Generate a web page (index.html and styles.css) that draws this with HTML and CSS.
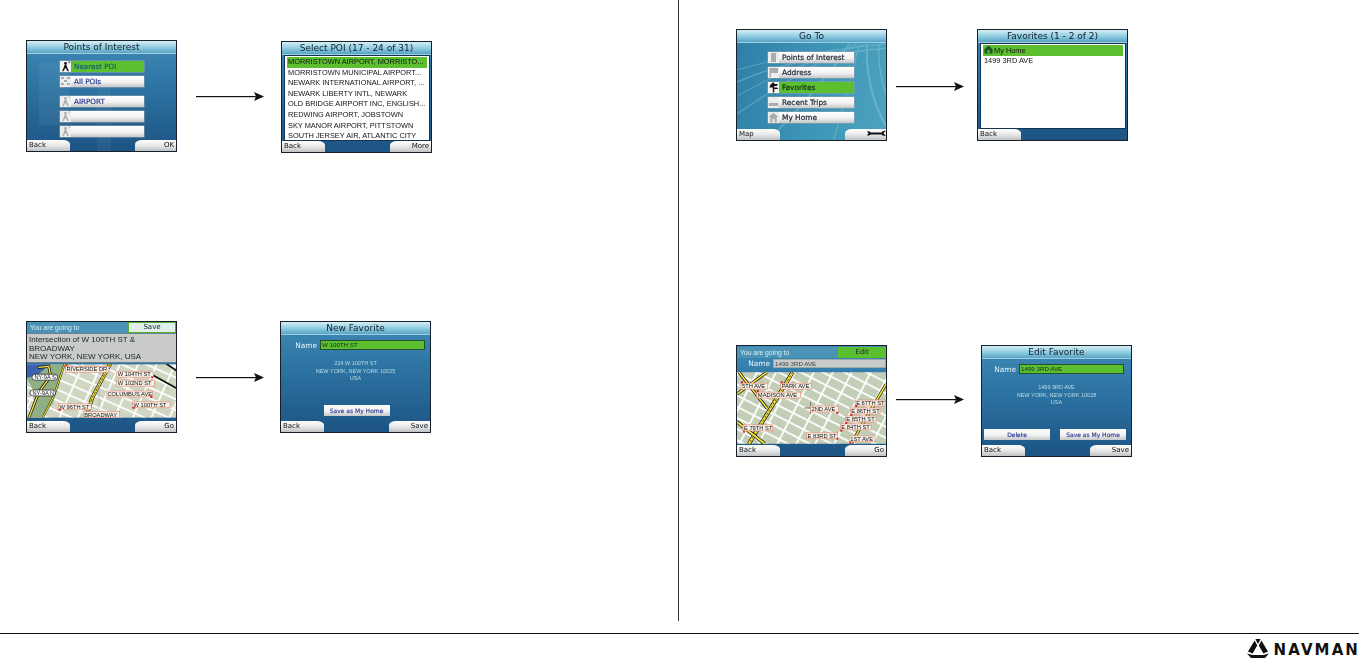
FILE: index.html
```html
<!DOCTYPE html>
<html lang="en">
<head>
    <meta charset="UTF-8">
    <meta name="viewport" content="width=device-width, initial-scale=1.0">
    <title>Navman manual page</title>
    <link rel="stylesheet" href="styles.css">
</head>
<body>
    <svg class="defs" width="0" height="0">
        <symbol id="arrow" viewBox="0 0 68 9">
            <rect x="0" y="4" width="60" height="1.2" fill="#111"/>
            <path d="M58 0 L68 4.5 L58 9 L60 4.5 Z" fill="#111"/>
        </symbol>
        <symbol id="i-person" viewBox="0 0 11 11">
            <circle cx="5.5" cy="2.2" r="1.3"/>
            <path d="M4.6 3.6 H6.4 L7 6 L9 10.2 H7.6 L5.5 6.8 L3.4 10.2 H2 L4 6 Z"/>
            <rect x="8.4" y="0.6" width="1.8" height="1"/>
        </symbol>
        <symbol id="i-dots" viewBox="0 0 11 11">
            <path d="M1 1h3v2H1zM7 1h3v2H7zM4 4h3v2H4zM1 7h3v2H1zM7 7h3v2H7z"/>
        </symbol>
        <symbol id="i-tower" viewBox="0 0 11 11">
            <path d="M3 1.5 Q5.5 .2 8 1.5 V10 H3 Z"/>
        </symbol>
        <symbol id="i-flag" viewBox="0 0 11 11">
            <path d="M1.5 1 H10 V6 H3 V10.5 H1.5 Z"/>
        </symbol>
        <symbol id="i-sign" viewBox="0 0 11 11">
            <path d="M4.8 .5 H6.2 V2 H10 L8.6 4 H6.2 V5.4 H9 L10.4 7 H6.2 V10.5 H4.8 V5.4 H1.2 L2.6 3.6 H4.8 V3.4 H1.6 Z"/>
        </symbol>
        <symbol id="i-trips" viewBox="0 0 11 11">
            <path d="M.8 6 H10.2 V9 H.8 Z"/>
        </symbol>
        <symbol id="i-home" viewBox="0 0 11 11">
            <path d="M5.5 .8 L10.4 5 H8.8 V10.4 H6.6 V7 H4.4 V10.4 H2.2 V5 H.6 Z"/>
        </symbol>
    </svg>

    <div class="page">
        <div class="col col-left">
            <div class="row row-a1">
                <div class="screen screen-poi">
                    <svg class="art" viewBox="0 0 151 112"><path d="M12 22 H34 Q42 22 42 30 V84 H12 Z M48 36 H100 V44 H48 Z M70 44 H84 V110 H70 Z" fill="#fff" opacity=".05"/></svg>
                    <div class="title">Points of Interest</div>
                    <div class="menu menu-poi">
                        <div class="item selected"><svg class="ico dark"><use href="#i-person"/></svg><span>Nearest POI</span></div>
                        <div class="item"><svg class="ico"><use href="#i-dots"/></svg><span>All POIs</span></div>
                        <div class="item gap-before"><svg class="ico"><use href="#i-person"/></svg><span>AIRPORT</span></div>
                        <div class="item"><svg class="ico"><use href="#i-person"/></svg></div>
                        <div class="item"><svg class="ico"><use href="#i-person"/></svg></div>
                    </div>
                    <div class="keys"><div class="key">Back</div><div class="key right">OK</div></div>
                </div>
                <svg class="arrow arrow-l"><use href="#arrow"/></svg>
                <div class="screen nudge">
                    <div class="title">Select POI (17 - 24 of 31)</div>
                    <div class="list">
                        <div class="line selected">MORRISTOWN AIRPORT, MORRISTO...</div>
                        <div class="line">MORRISTOWN MUNICIPAL AIRPORT...</div>
                        <div class="line">NEWARK INTERNATIONAL AIRPORT, ...</div>
                        <div class="line">NEWARK LIBERTY INTL, NEWARK</div>
                        <div class="line">OLD BRIDGE AIRPORT INC, ENGLISH...</div>
                        <div class="line">REDWING AIRPORT, JOBSTOWN</div>
                        <div class="line">SKY MANOR AIRPORT, PITTSTOWN</div>
                        <div class="line">SOUTH JERSEY AIR, ATLANTIC CITY</div>
                    </div>
                    <div class="keys"><div class="key">Back</div><div class="key right">More</div></div>
                </div>
            </div>

            <div class="row row-a2">
                <div class="screen">
                    <div class="going"><span>You are going to</span><div class="going-btn pale">Save</div></div>
                    <div class="desc">Intersection of W 100TH ST &amp;<br>BROADWAY<br>NEW YORK, NEW YORK, USA</div>
                    <svg class="map map-short" viewBox="0 0 151 54">
                        <defs>
                            <pattern id="grid-a" width="17" height="10" patternUnits="userSpaceOnUse" patternTransform="rotate(24)">
                                <rect width="17" height="10" fill="#cfd6c2"/>
                                <rect width="17" height="1.8" fill="#fff"/>
                                <rect width="1.8" height="10" fill="#fff"/>
                            </pattern>
                        </defs>
                        <rect width="151" height="54" fill="url(#grid-a)"/>
                        <path d="M0 0 H24 L12 10 L0 14 Z" fill="#3b62b0"/>
                        <path d="M0 14 L12 10 L24 0 H38 L32 22 L26 40 L14 54 H4 L8 30 Z" fill="#8fae82"/>
                        <g fill="none" stroke-linecap="round">
                            <path d="M2 54 L12 28 L24 12 L22 2 L12 3" stroke="#111" stroke-width="2.8"/>
                            <path d="M2 54 L12 28 L24 12 L22 2 L12 3" stroke="#f5e43a" stroke-width="1.4"/>
                            <path d="M38 0 L28 30 L16 54" stroke="#111" stroke-width="2"/>
                            <path d="M38 0 L28 30 L16 54" stroke="#f5e43a" stroke-width="1.1"/>
                            <path d="M84 0 L66 34 L60 54" stroke="#111" stroke-width="3.8"/>
                            <path d="M84 0 L66 34 L60 54" stroke="#f5e43a" stroke-width="2.6"/>
                            <path d="M84 0 L66 34 L60 54" stroke="#111" stroke-width=".7" stroke-dasharray="2 2"/>
                            <path d="M126 10 L151 24" stroke="#111" stroke-width="1.8"/>
                            <path d="M142 0 L151 6" stroke="#111" stroke-width="1.8"/>
                            <path d="M73 54 V0" stroke="#9fb0c8" stroke-width=".6"/>
                        </g>
                        <g class="tag"><rect x="39" y="2" width="44" height="6"/><text x="40" y="7">RIVERSIDE DR</text></g>
                        <g class="tag"><rect x="91" y="7" width="37" height="6"/><text x="92" y="12">W 104TH ST</text></g>
                        <g class="tag"><rect x="91" y="16" width="38" height="6"/><text x="92" y="21">W 102ND ST</text></g>
                        <g class="tag"><rect x="81" y="27" width="46" height="6"/><text x="81.5" y="32">COLUMBUS AVE</text></g>
                        <g class="tag"><rect x="107" y="38" width="38" height="6"/><text x="108" y="43">W 100TH ST</text></g>
                        <g class="tag"><rect x="32" y="40" width="33" height="6"/><text x="33" y="45">W 96TH ST</text></g>
                        <g class="tag"><rect x="57" y="48" width="37" height="6"/><text x="58" y="53">BROADWAY</text></g>
                        <g class="pill"><rect x="5" y="10" width="26" height="6" rx="3"/><text x="7.5" y="15">NY-9A S</text></g>
                        <g class="pill"><rect x="3" y="26" width="26" height="6" rx="3"/><text x="5.5" y="31">NY-9A N</text></g>
                        <path fill="#e02020" d="M39 0h2v2h-2zM126 12h2v2h-2zM125 32h2v2h-2zM107 43h2v2h-2zM32 45h2v2h-2z"/>
                    </svg>
                    <div class="keys"><div class="key">Back</div><div class="key right">Go</div></div>
                </div>
                <svg class="arrow arrow-l"><use href="#arrow"/></svg>
                <div class="screen shift-l">
                    <div class="title">New Favorite</div>
                    <div class="name-row"><label>Name</label><div class="field">W 100TH ST</div></div>
                    <div class="addr">224 W 100TH ST<br>NEW YORK, NEW YORK 10025<br>USA</div>
                    <div class="actions"><div class="btn">Save as My Home</div></div>
                    <div class="keys"><div class="key">Back</div><div class="key right">Save</div></div>
                </div>
            </div>
        </div>

        <div class="col col-right">
            <div class="row row-b1">
                <div class="screen screen-goto">
                    <svg class="art" viewBox="0 0 151 112">
                        <g fill="none" stroke="#bfe6f0" opacity=".28">
                            <path d="M0 40 Q60 22 151 14" stroke-width="1"/>
                            <path d="M0 52 Q60 26 151 18" stroke-width="1.4"/>
                            <path d="M0 66 Q60 32 130 14" stroke-width="1"/>
                            <path d="M0 84 Q70 36 120 14" stroke-width="1.2"/>
                            <path d="M30 112 Q90 50 112 14" stroke-width="1.6"/>
                            <path d="M96 112 Q112 60 122 14" stroke-width="1"/>
                            <path d="M151 100 Q128 60 130 14" stroke-width="2"/>
                            <path d="M151 70 Q140 40 142 14" stroke-width="1.2"/>
                        </g>
                    </svg>
                    <div class="title">Go To</div>
                    <div class="menu menu-goto">
                        <div class="item"><svg class="ico"><use href="#i-tower"/></svg><span>Points of Interest</span></div>
                        <div class="item"><svg class="ico"><use href="#i-flag"/></svg><span>Address</span></div>
                        <div class="item selected"><svg class="ico dark"><use href="#i-sign"/></svg><span>Favorites</span></div>
                        <div class="item"><svg class="ico"><use href="#i-trips"/></svg><span>Recent Trips</span></div>
                        <div class="item"><svg class="ico"><use href="#i-home"/></svg><span>My Home</span></div>
                    </div>
                    <div class="keys">
                        <div class="key">Map</div>
                        <div class="key right">
                            <svg class="wrench" viewBox="0 0 19 7"><path d="M0 1.4 Q2.4 .6 3.6 2.4 H14.6 Q15.8 .4 19 1 L16.8 2.4 V3.8 L19 5.4 Q15.8 6.4 14.6 4.4 H3.6 Q2.4 6 0 5.2 L1.6 3.4 Z" fill="#111"/></svg>
                        </div>
                    </div>
                </div>
                <svg class="arrow arrow-r"><use href="#arrow"/></svg>
                <div class="screen">
                    <div class="title">Favorites (1 - 2 of 2)</div>
                    <div class="list list-fav">
                        <div class="line selected"><svg class="ico-fav" viewBox="0 0 9 9"><path d="M4.5 .6 L8.6 4.2 V8.4 H.4 V4.2 Z M3.4 5 V8 H5.6 V5 Z" fill="#1d5a2a"/></svg>My Home</div>
                        <div class="line">1499 3RD AVE</div>
                    </div>
                    <div class="keys"><div class="key">Back</div></div>
                </div>
            </div>

            <div class="row row-b2">
                <div class="screen">
                    <div class="going going-edit"><span>You are going to</span><div class="going-btn green">Edit</div></div>
                    <div class="name-row name-row-map"><label>Name</label><div class="field grey">1499 3RD AVE</div></div>
                    <svg class="map map-tall" viewBox="0 0 150 72">
                        <defs>
                            <pattern id="grid-b" width="17" height="10" patternUnits="userSpaceOnUse" patternTransform="rotate(27)">
                                <rect width="17" height="10" fill="#c3ceb7"/>
                                <rect width="17" height="1.8" fill="#fff"/>
                                <rect width="1.8" height="10" fill="#fff"/>
                            </pattern>
                        </defs>
                        <rect width="150" height="72" fill="url(#grid-b)"/>
                        <g fill="none">
                            <path d="M56 0 L12 72" stroke="#111" stroke-width="4"/>
                            <path d="M56 0 L12 72" stroke="#f5e43a" stroke-width="2.6"/>
                            <path d="M56 0 L12 72" stroke="#111" stroke-width=".7" stroke-dasharray="2 2"/>
                            <path d="M0 50 L28 72" stroke="#111" stroke-width="3.4"/>
                            <path d="M0 50 L28 72" stroke="#f5e43a" stroke-width="2"/>
                            <path d="M2 0 L30 36" stroke="#111" stroke-width="3"/>
                            <path d="M2 0 L30 36" stroke="#f5e43a" stroke-width="1.6"/>
                            <path d="M30 0 L0 22" stroke="#111" stroke-width="3"/>
                            <path d="M30 0 L0 22" stroke="#f5e43a" stroke-width="1.6"/>
                            <path d="M150 12 L115 72" stroke="#111" stroke-width="3"/>
                            <path d="M150 12 L115 72" stroke="#f5e43a" stroke-width="1.6"/>
                            <path d="M68 36 H82 M74 30 V42" stroke="#555" stroke-width=".8"/>
                        </g>
                        <g class="tag"><rect x="4" y="11" width="27" height="6"/><text x="5" y="16">5TH AVE</text></g>
                        <g class="tag"><rect x="44" y="11" width="31" height="6"/><text x="45" y="16">PARK AVE</text></g>
                        <g class="tag"><rect x="20" y="20" width="44" height="6"/><text x="21" y="25">MADISON AVE</text></g>
                        <g class="tag"><rect x="74" y="34" width="28" height="6"/><text x="75" y="39">2ND AVE</text></g>
                        <g class="tag"><rect x="119" y="28" width="30" height="6"/><text x="120" y="33">E 87TH ST</text></g>
                        <g class="tag"><rect x="114" y="36" width="30" height="6"/><text x="115" y="41">E 86TH ST</text></g>
                        <g class="tag"><rect x="109" y="44" width="31" height="6"/><text x="110" y="49">E 85TH ST</text></g>
                        <g class="tag"><rect x="104" y="52" width="31" height="6"/><text x="105" y="57">E 84TH ST</text></g>
                        <g class="tag"><rect x="6" y="53" width="30" height="6"/><text x="7" y="58">E 79TH ST</text></g>
                        <g class="tag"><rect x="70" y="61" width="31" height="6"/><text x="71" y="66">E 83RD ST</text></g>
                        <g class="tag"><rect x="113" y="64" width="26" height="6"/><text x="114" y="69">1ST AVE</text></g>
                        <path fill="#e02020" d="M4 9h2v2H4zM44 9h2v2h-2zM20 18h2v2h-2zM100 40h2v2h-2zM119 33h2v2h-2zM114 42h2v2h-2zM109 50h2v2h-2zM104 58h2v2h-2zM6 59h2v2H6zM100 66h2v2h-2zM113 70h2v2h-2z"/>
                    </svg>
                    <div class="keys"><div class="key">Back</div><div class="key right">Go</div></div>
                </div>
                <svg class="arrow arrow-r arrow-wide"><use href="#arrow"/></svg>
                <div class="screen screen-edit">
                    <div class="title">Edit Favorite</div>
                    <div class="name-row"><label>Name</label><div class="field">1499 3RD AVE</div></div>
                    <div class="addr">1499 3RD AVE<br>NEW YORK, NEW YORK 10028<br>USA</div>
                    <div class="actions actions-two"><div class="btn">Delete</div><div class="btn">Save as My Home</div></div>
                    <div class="keys"><div class="key">Back</div><div class="key right">Save</div></div>
                </div>
            </div>
        </div>
    </div>

    <footer class="footer">
        <div class="logo">
            <svg class="logo-mark" viewBox="0 0 22 19">
                <path d="M8.4 0 H13.6 L11 5 Z M7.6 1.6 L10.2 6.4 L5.6 14.4 L1 12.6 Z M14.4 1.6 L21 12.6 L16.4 14.4 L11.8 6.4 Z M0 14.4 L5.4 16 H16.6 L22 14.4 L18 19 H4 Z" fill="#111"/>
            </svg>
            <span>NAVMAN</span>
        </div>
    </footer>
</body>
</html>
```

FILE: styles.css
```css
html, body {
    margin: 0;
    height: 659px;
    overflow: hidden;
    background: #fff;
}

body {
    font-family: "DejaVu Sans", sans-serif;
    color: #111;
}

.defs {
    position: absolute;
}

.page {
    display: grid;
    grid-template-columns: 679px 1fr;
    height: 621px;
}

.col-left {
    border-right: 1px solid #333;
}

.row {
    display: flex;
    align-items: flex-start;
}

.row-a1 { padding: 40px 0 0 26px; }
.row-a2 { padding: 168px 0 0 26px; }
.row-b1 { padding: 29px 0 0 57px; }
.row-b2 { padding: 204px 0 0 57px; }

.arrow {
    width: 68px;
    height: 9px;
    flex: none;
}

.arrow-l { margin: 52px 17px 0 19px; }
.arrow-r { margin: 53px 13px 0 9px; }
.row-b2 .arrow-r { margin-top: 50px; }
.arrow-wide { margin-right: 17px; }

.nudge { margin-top: 1px; }
.shift-l { margin-left: -1px; }

/* device screens */
.screen {
    position: relative;
    width: 151px;
    height: 112px;
    box-sizing: border-box;
    flex: none;
    display: flex;
    flex-direction: column;
    border: 1px solid #16202a;
    background: linear-gradient(#3f8ab6 0%, #2f77a6 35%, #1c5484 100%);
    overflow: hidden;
    filter: blur(0.35px);
}

.screen-goto {
    background: linear-gradient(100deg, #2f7fa8, #3f97b8 60%, #4ea3bd);
}

.art {
    position: absolute;
    left: 0;
    top: 0;
    width: 151px;
    height: 112px;
}

.title {
    position: relative;
    height: 12px;
    line-height: 12px;
    text-align: center;
    font-size: 9px;
    color: #10202c;
    background: linear-gradient(#d7eef4, #8ccbe0 55%, #5aa3c4);
    border-bottom: 1px solid #9fd0e0;
}

/* menus */
.menu {
    position: relative;
    display: flex;
    flex-direction: column;
    align-self: center;
    gap: 4px;
}

.menu-poi {
    width: 84px;
    margin-top: 7px;
    margin-left: 1px;
    color: #2b3a92;
}

.menu-goto {
    width: 86px;
    margin-top: 9px;
    margin-left: -1px;
    color: #1b2330;
}

.item {
    height: 11px;
    display: flex;
    align-items: center;
    gap: 3px;
    font-size: 7.2px;
    line-height: 11px;
    -webkit-text-stroke: 0.2px;
    background: linear-gradient(#fff, #f2f2f2 55%, #c4c6c8);
    box-shadow: 0 0 0 0.5px #9aa3aa;
}

.menu-goto .item {
    font-size: 7.4px;
}

.item.selected {
    background: #5cbf2f;
    color: #17606e;
}

.menu-goto .item.selected {
    color: #10301c;
}

.gap-before {
    margin-top: 5px;
}

.ico {
    width: 11px;
    height: 11px;
    flex: none;
    fill: #a9adb0;
    background: #eceded;
}

.ico.dark {
    fill: #111;
    background: #f4f4f4;
}

/* lists */
.list {
    flex: 1;
    margin: 0 1px 0 2px;
    padding: 1px 2px 0;
    background: #fff;
    border: 1px solid #15324e;
    min-height: 0;
}

.line {
    height: 10.6px;
    line-height: 10.6px;
    padding-left: 1px;
    font-family: "Liberation Sans", sans-serif;
    font-size: 7.4px;
    white-space: nowrap;
    overflow: hidden;
}

.line.selected {
    background: #5cbf2f;
}

.ico-fav {
    width: 9px;
    height: 9px;
    margin-right: 1px;
    vertical-align: -1.5px;
}

/* soft keys */
.keys {
    position: relative;
    height: 11px;
    margin-top: auto;
    flex: none;
    display: flex;
    justify-content: space-between;
    font-size: 7px;
    line-height: 11px;
}

.list + .keys {
    margin-top: 0;
}

.key {
    width: 43px;
    padding-left: 2px;
    box-sizing: border-box;
    background: linear-gradient(#fff, #e8e8e8 50%, #bfc2c4);
    border-top-right-radius: 7px 4px;
}

.key.right {
    width: 41px;
    padding: 0 2px 0 0;
    text-align: right;
    border-top-right-radius: 0;
    border-top-left-radius: 7px 4px;
}

.wrench {
    width: 19px;
    height: 7px;
    margin-right: -2px;
    vertical-align: -0.5px;
}

/* you are going to */
.going {
    display: flex;
    justify-content: space-between;
    height: 11px;
    font-family: "Liberation Sans", sans-serif;
    font-size: 6.8px;
    line-height: 11px;
    color: #d8eef4;
    background: #4a93b6;
    padding-left: 3px;
}

.going-edit {
    margin-top: 1px;
}

.going-btn {
    width: 48px;
    box-sizing: border-box;
    text-align: center;
    font-family: "DejaVu Sans", sans-serif;
    font-size: 7px;
    color: #10202c;
    border: 1px solid #56b030;
    line-height: 9px;
}

.going-btn.pale {
    background: #dff0ea;
}

.going-btn.green {
    background: #5cbf2f;
    border-color: #5cbf2f;
}

.desc {
    height: 30px;
    box-sizing: border-box;
    padding: 2px 2px;
    line-height: 8.6px;
    color: #20262c;
    background: #c9cbc9;
    border: 1px solid #6d8090;
    border-width: 1px 0;
    font-family: "Liberation Sans", sans-serif;
    font-size: 8px;
}

.map {
    display: block;
    flex: none;
}

.map-short {
    width: 149px;
    height: 54px;
    margin-top: 1px;
}

.map-tall {
    width: 149px;
    height: 72px;
    margin-top: 4px;
}

.tag rect {
    fill: #f6f1e8;
    stroke: #e58b76;
    stroke-width: 0.7;
}

.pill rect {
    fill: #fff;
    stroke: #111;
    stroke-width: 0.7;
}

.map text {
    font-family: "Liberation Sans", sans-serif;
    font-size: 5.8px;
    fill: #111;
}

/* favorite forms */
.name-row {
    display: flex;
    align-items: center;
    justify-content: flex-end;
    gap: 3px;
    margin: 5px 5px 0 0;
    color: #e6f3f8;
}

.screen-edit .name-row {
    margin-right: 7px;
}

.name-row-map {
    margin: 1px 0 0;
    height: 9px;
}

.name-row label {
    font-size: 7.4px;
}

.field {
    width: 105px;
    height: 10px;
    line-height: 8px;
    box-sizing: border-box;
    padding-left: 1px;
    font-family: "Liberation Sans", sans-serif;
    font-size: 6.2px;
    color: #132a18;
    background: #5cbf2f;
    border: 1px solid #24502c;
}

.field.grey {
    width: 113px;
    height: 9px;
    line-height: 7px;
    color: #3a4248;
    background: #c9cbc9;
    border-color: #9aa;
}

.addr {
    margin-top: 10px;
    text-align: center;
    font-family: "Liberation Sans", sans-serif;
    font-size: 5.5px;
    line-height: 7.6px;
    color: #b9dbe8;
}

.actions {
    display: flex;
    justify-content: center;
    margin-top: 22px;
    padding-left: 2px;
}

.actions-two {
    justify-content: space-between;
    padding: 0 5px 0 2px;
}

.btn {
    width: 66px;
    height: 11px;
    line-height: 11px;
    text-align: center;
    font-size: 6px;
    color: #2b3a92;
    -webkit-text-stroke: 0.15px;
    background: linear-gradient(#fff, #f2f2f2 55%, #c4c6c8);
}

/* footer */
.footer {
    margin-top: 12px;
    border-top: 1px solid #111;
    height: 25px;
    display: flex;
    justify-content: flex-end;
}

.logo {
    display: flex;
    align-items: center;
    gap: 5px;
    padding-top: 5px;
    height: 20px;
    font-size: 15px;
    font-weight: bold;
    letter-spacing: 2.1px;
    margin-right: -1px;
}

.logo span {
    padding-top: 2px;
}

.logo-mark {
    width: 22px;
    height: 19px;
    margin-top: -1px;
}
```
